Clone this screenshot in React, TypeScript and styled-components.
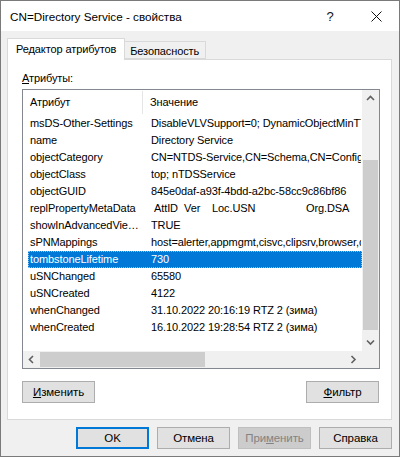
import styled, { createGlobalStyle } from "styled-components"

const GlobalStyle = createGlobalStyle`
    html, body {
        margin: 0;
        padding: 0;
        background: #f0f0f0;
    }
    body {
        font-family: "Liberation Sans", Arial, sans-serif;
        font-size: 11px;
        letter-spacing: -0.1px;
        color: #000;
    }
    * { box-sizing: border-box; }
`;

const Window = styled.div`
    width: 400px;
    height: 457px;
    border: 1px solid #7a7a7a;
    background: #f0f0f0;
    display: flex;
    flex-direction: column;
`;

const TitleBar = styled.div`
    height: 30px;
    background: #fff;
    display: flex;
    align-items: center;
    padding-left: 9px;
`;

const TitleText = styled.div`
    flex: 1;
    font-size: 11.7px;
    letter-spacing: 0;
`;

const CaptionButton = styled.div`
    width: 46px;
    height: 30px;
    display: flex;
    align-items: center;
    justify-content: center;
    font-size: 13px;
    color: #111;
`;

const Body = styled.div`
    flex: 1;
    padding: 7px 7px 0 6px;
    display: flex;
    flex-direction: column;
`;

const TabStrip = styled.div`
    display: flex;
    align-items: flex-end;
    height: 21px;
`;

const Tab = styled.div<{ $active?: boolean }>`
    position: relative;
    z-index: 1;
    height: ${p => (p.$active ? "22px" : "18px")};
    margin-bottom: ${p => (p.$active ? "-1px" : "0")};
    padding: ${p => (p.$active ? "3px 8px 0 8px" : "2px 6px 0 5px")};
    border: 1px solid #d9d9d9;
    border-bottom: ${p => (p.$active ? "none" : "1px solid #d9d9d9")};
    border-left: ${p => (p.$active ? "1px solid #d9d9d9" : "none")};
    background: ${p => (p.$active ? "#fff" : "#f0f0f0")};
    white-space: nowrap;
    line-height: 14px;
`;

const Panel = styled.div`
    height: 361px;
    background: #fff;
    border: 1px solid #d9d9d9;
    padding: 10px 11px 0 14px;
    display: flex;
    flex-direction: column;
`;

const Label = styled.div`
    height: 16px;
    line-height: 16px;
    margin-bottom: 3px;
`;

const ListBox = styled.div`
    height: 280px;
    border: 1px solid #828790;
    display: grid;
    grid-template-columns: 1fr 17px;
    grid-template-rows: 1fr 17px;
    overflow: hidden;
`;

const ListArea = styled.div`
    overflow: hidden;
    background: #fff;
`;

const Header = styled.div`
    height: 25px;
    display: flex;
    align-items: center;
    padding-left: 7px;
`;

const HeaderCell = styled.div<{ $w?: number }>`
    width: ${p => (p.$w ? `${p.$w}px` : "auto")};
    height: 23px;
    line-height: 23px;
    padding-left: ${p => (p.$w ? "0" : "7px")};
    border-right: ${p => (p.$w ? "1px solid #e5e5e5" : "none")};
`;

const Row = styled.div<{ $selected?: boolean }>`
    height: 17px;
    line-height: 15px;
    margin-left: 5px;
    padding-left: 1px;
    display: flex;
    white-space: nowrap;
    background: ${p => (p.$selected ? "#0078d7" : "transparent")};
    color: ${p => (p.$selected ? "#fff" : "#000")};
    border: 1px dotted ${p => (p.$selected ? "#8cc3f0" : "transparent")};
`;

const NameCell = styled.div`
    width: 121px;
    flex-shrink: 0;
    padding-right: 6px;
    overflow: hidden;
    text-overflow: ellipsis;
`;

const ValueCell = styled.div`
    overflow: hidden;
    flex: 1;
`;

const MetaCol = styled.span<{ $w: number }>`
    display: inline-block;
    width: ${p => p.$w}px;
`;

const VScroll = styled.div`
    background: #f0f0f0;
    display: flex;
    flex-direction: column;
`;

const HScroll = styled.div`
    background: #f0f0f0;
    display: flex;
`;

const ArrowBtn = styled.div`
    width: 17px;
    height: 17px;
    flex-shrink: 0;
    display: flex;
    align-items: center;
    justify-content: center;
`;

const VTrack = styled.div`
    flex: 1;
    padding-top: 53px;
`;

const VThumb = styled.div`
    height: 170px;
    margin: 0 1px;
    background: #cdcdcd;
`;

const HTrack = styled.div`
    flex: 1;
    display: flex;
    align-items: stretch;
    padding: 1px 0;
`;

const HThumb = styled.div`
    width: 165px;
    background: #cdcdcd;
`;

const Corner = styled.div`
    background: #f0f0f0;
`;

const ButtonRow = styled.div<{ $end?: boolean }>`
    display: flex;
    justify-content: ${p => (p.$end ? "flex-end" : "space-between")};
    gap: 8px;
`;

const Button = styled.div<{ $default?: boolean; $disabled?: boolean }>`
    width: 73px;
    height: 22px;
    display: flex;
    align-items: center;
    justify-content: center;
    font-size: 11.5px;
    background: ${p => (p.$disabled ? "#cccccc" : "#e1e1e1")};
    color: ${p => (p.$disabled ? "#838383" : "#000")};
    border: ${p => (p.$default ? "2px solid #0078d7" : p.$disabled ? "1px solid #bfbfbf" : "1px solid #adadad")};
`;

const PanelButtons = styled(ButtonRow)`
    margin-top: 12px;
    padding-right: 1px;
`;

const Footer = styled(ButtonRow)`
    margin-top: 7px;
    padding-right: 0;
`;

interface Attr {
    name: string,
    value: React.ReactNode,
    selected?: boolean
}

const attrs: Attr[] = [
    { name: "msDS-Other-Settings", value: "DisableVLVSupport=0; DynamicObjectMinTTL=900; DynamicObjectDefaultTTL=86400" },
    { name: "name", value: "Directory Service" },
    { name: "objectCategory", value: "CN=NTDS-Service,CN=Schema,CN=Configuration,DC=corp,DC=local" },
    { name: "objectClass", value: "top; nTDSService" },
    { name: "objectGUID", value: "845e0daf-a93f-4bdd-a2bc-58cc9c86bf86" },
    {
        name: "replPropertyMetaData",
        value: (
            <>
                <MetaCol $w={3} />
                <MetaCol $w={30}>AttID</MetaCol>
                <MetaCol $w={28}>Ver</MetaCol>
                <MetaCol $w={94}>Loc.USN</MetaCol>
                <MetaCol $w={60}>Org.DSA</MetaCol>
            </>
        )
    },
    { name: "showInAdvancedViewOnly", value: "TRUE" },
    { name: "sPNMappings", value: "host=alerter,appmgmt,cisvc,clipsrv,browser,dhcp,dnscache" },
    { name: "tombstoneLifetime", value: "730", selected: true },
    { name: "uSNChanged", value: "65580" },
    { name: "uSNCreated", value: "4122" },
    { name: "whenChanged", value: "31.10.2022 20:16:19 RTZ 2 (зима)" },
    { name: "whenCreated", value: "16.10.2022 19:28:54 RTZ 2 (зима)" },
];

function Chevron({ dir }: { dir: "up" | "down" | "left" | "right" }) {
    const pts = {
        up: "1,5 4.5,1.5 8,5",
        down: "1,1.5 4.5,5 8,1.5",
        left: "5,1 1.5,4.5 5,8",
        right: "1.5,1 5,4.5 1.5,8",
    }[dir];
    const vertical = dir === "up" || dir === "down";
    return (
        <svg width={vertical ? 9 : 7} height={vertical ? 7 : 9} viewBox={vertical ? "0 0 9 7" : "0 0 7 9"}>
            <polyline points={pts} fill="none" stroke="#606060" strokeWidth="1.6" />
        </svg>
    );
}

function App() {
    return (
        <>
            <GlobalStyle />
            <Window>
                <TitleBar>
                    <TitleText>CN=Directory Service - свойства</TitleText>
                    <CaptionButton>?</CaptionButton>
                    <CaptionButton>
                        <svg width="11" height="11" viewBox="0 0 11 11">
                            <path d="M0.5 0.5 L10.5 10.5 M10.5 0.5 L0.5 10.5" stroke="#111" strokeWidth="1" />
                        </svg>
                    </CaptionButton>
                </TitleBar>
                <Body>
                    <TabStrip>
                        <Tab $active>Редактор атрибутов</Tab>
                        <Tab>Безопасность</Tab>
                    </TabStrip>
                    <Panel>
                        <Label><u>А</u>трибуты:</Label>
                        <ListBox>
                            <ListArea>
                                <Header>
                                    <HeaderCell $w={113}>Атрибут</HeaderCell>
                                    <HeaderCell>Значение</HeaderCell>
                                </Header>
                                {attrs.map(a => (
                                    <Row key={a.name} $selected={a.selected}>
                                        <NameCell>{a.name}</NameCell>
                                        <ValueCell>{a.value}</ValueCell>
                                    </Row>
                                ))}
                            </ListArea>
                            <VScroll>
                                <ArrowBtn><Chevron dir="up" /></ArrowBtn>
                                <VTrack><VThumb /></VTrack>
                                <ArrowBtn><Chevron dir="down" /></ArrowBtn>
                            </VScroll>
                            <HScroll>
                                <ArrowBtn><Chevron dir="left" /></ArrowBtn>
                                <HTrack><HThumb /></HTrack>
                                <ArrowBtn><Chevron dir="right" /></ArrowBtn>
                            </HScroll>
                            <Corner />
                        </ListBox>
                        <PanelButtons>
                            <Button><span><u>И</u>зменить</span></Button>
                            <Button><span><u>Ф</u>ильтр</span></Button>
                        </PanelButtons>
                    </Panel>
                    <Footer $end>
                        <Button $default>OK</Button>
                        <Button>Отмена</Button>
                        <Button $disabled><span>При<u>м</u>енить</span></Button>
                        <Button>Справка</Button>
                    </Footer>
                </Body>
            </Window>
        </>
    );
}

export default App
